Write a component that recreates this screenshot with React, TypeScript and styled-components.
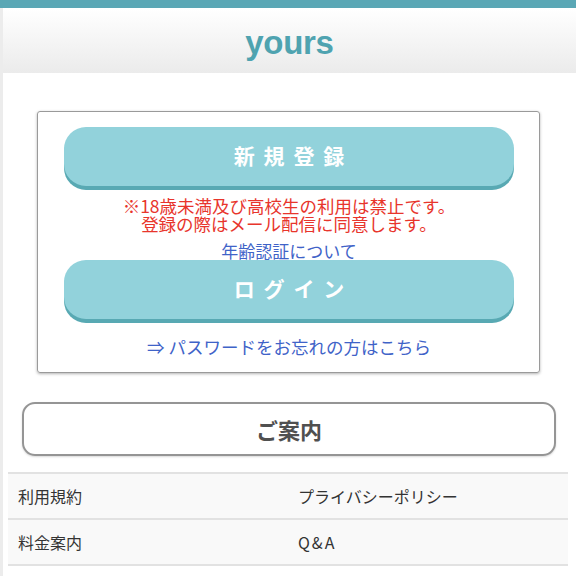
import React from "react";
import styled, { createGlobalStyle } from "styled-components";

const GlobalStyle = createGlobalStyle`
  html, body {
    margin: 0;
    padding: 0;
    background: #fff;
  }
  body {
    font-family: "Noto Sans CJK JP", "Noto Sans", sans-serif;
    color: #333;
  }
`;

const TopBar = styled.div`
  height: 8px;
  background: #5aa7b5;
`;

const Page = styled.div`
  border-left: 3px solid #ececec;
  min-height: 568px;
`;

const Header = styled.header`
  height: 65px;
  display: flex;
  align-items: center;
  justify-content: center;
  background: linear-gradient(#ffffff, #ebebeb);
`;

const Logo = styled.h1`
  margin: 0;
  font-family: "Liberation Sans", Arial, sans-serif;
  font-weight: bold;
  font-size: 33px;
  color: #4fa3b0;
  letter-spacing: -0.3px;
  padding-top: 4px;
`;

const Main = styled.main`
  padding: 38px 5px 0 5px;
`;

const EntryBox = styled.section`
  margin: 0 31px 0 29px;
  border: 1px solid #9a9a9a;
  border-radius: 3px;
  box-shadow: 0 1px 3px rgba(0, 0, 0, 0.3);
  padding: 15px 25px 16px 26px;
  display: flex;
  flex-direction: column;
  align-items: stretch;
`;

const BigButton = styled.a`
  display: flex;
  align-items: center;
  justify-content: center;
  height: 59px;
  border-radius: 22px;
  background: #92d2db;
  box-shadow: 0 4px 0 #58a9b3;
  color: #fff;
  font-weight: bold;
  font-size: 21px;
  letter-spacing: 0.42em;
  padding-left: 0.42em;
  text-decoration: none;
  padding-bottom: 3px;
  box-sizing: border-box;
`;

const Notice = styled.p`
  margin: 11px 0 0 0;
  text-align: center;
  color: #e8352c;
  font-size: 17.5px;
  line-height: 18px;
`;

const TextLink = styled.a<{ $gap: number; $size: number }>`
  display: block;
  margin-top: ${(p) => p.$gap}px;
  text-align: center;
  color: #3f63c8;
  font-size: ${(p) => p.$size}px;
  line-height: 18px;
  text-decoration: none;
`;

const GuideButton = styled.div`
  margin: 29px 15px 0 14px;
  height: 54px;
  box-sizing: border-box;
  border: 2px solid #959595;
  border-radius: 13px;
  display: flex;
  align-items: center;
  justify-content: center;
  font-weight: bold;
  font-size: 22px;
  color: #505050;
  box-shadow: 0 1px 2px rgba(0, 0, 0, 0.15);
`;

const MenuTable = styled.ul`
  list-style: none;
  margin: 16px 3px 0 0;
  padding: 0;
  display: grid;
  grid-template-columns: 1fr 1fr;
  border-top: 2px solid #e2e2e2;
  background: #f9f9f9;
`;

const MenuItem = styled.li<{ $wide?: boolean }>`
  height: 46px;
  box-sizing: border-box;
  border-bottom: 2px solid #e2e2e2;
  display: flex;
  align-items: center;
  padding-left: 10px;
  font-size: 16px;
  color: #333;
  letter-spacing: ${(p) => (p.$wide ? "2px" : "0")};
`;

const menu = [
  { label: "利用規約" },
  { label: "プライバシーポリシー" },
  { label: "料金案内" },
  { label: "Q&A", wide: true },
];

export default function App() {
  return (
    <>
      <GlobalStyle />
      <TopBar />
      <Page>
        <Header>
          <Logo>yours</Logo>
        </Header>
        <Main>
          <EntryBox>
            <BigButton href="#">新規登録</BigButton>
            <Notice>
              ※18歳未満及び高校生の利用は禁止です。
              <br />
              登録の際はメール配信に同意します。
            </Notice>
            <TextLink href="#" $gap={9} $size={17}>
              年齢認証について
            </TextLink>
            <BigButton href="#">ログイン</BigButton>
            <TextLink href="#" $gap={19} $size={17.5}>
              ⇒ パスワードをお忘れの方はこちら
            </TextLink>
          </EntryBox>
          <GuideButton>ご案内</GuideButton>
          <MenuTable>
            {menu.map((m) => (
              <MenuItem key={m.label} $wide={m.wide}>
                {m.label}
              </MenuItem>
            ))}
          </MenuTable>
        </Main>
      </Page>
    </>
  );
}
